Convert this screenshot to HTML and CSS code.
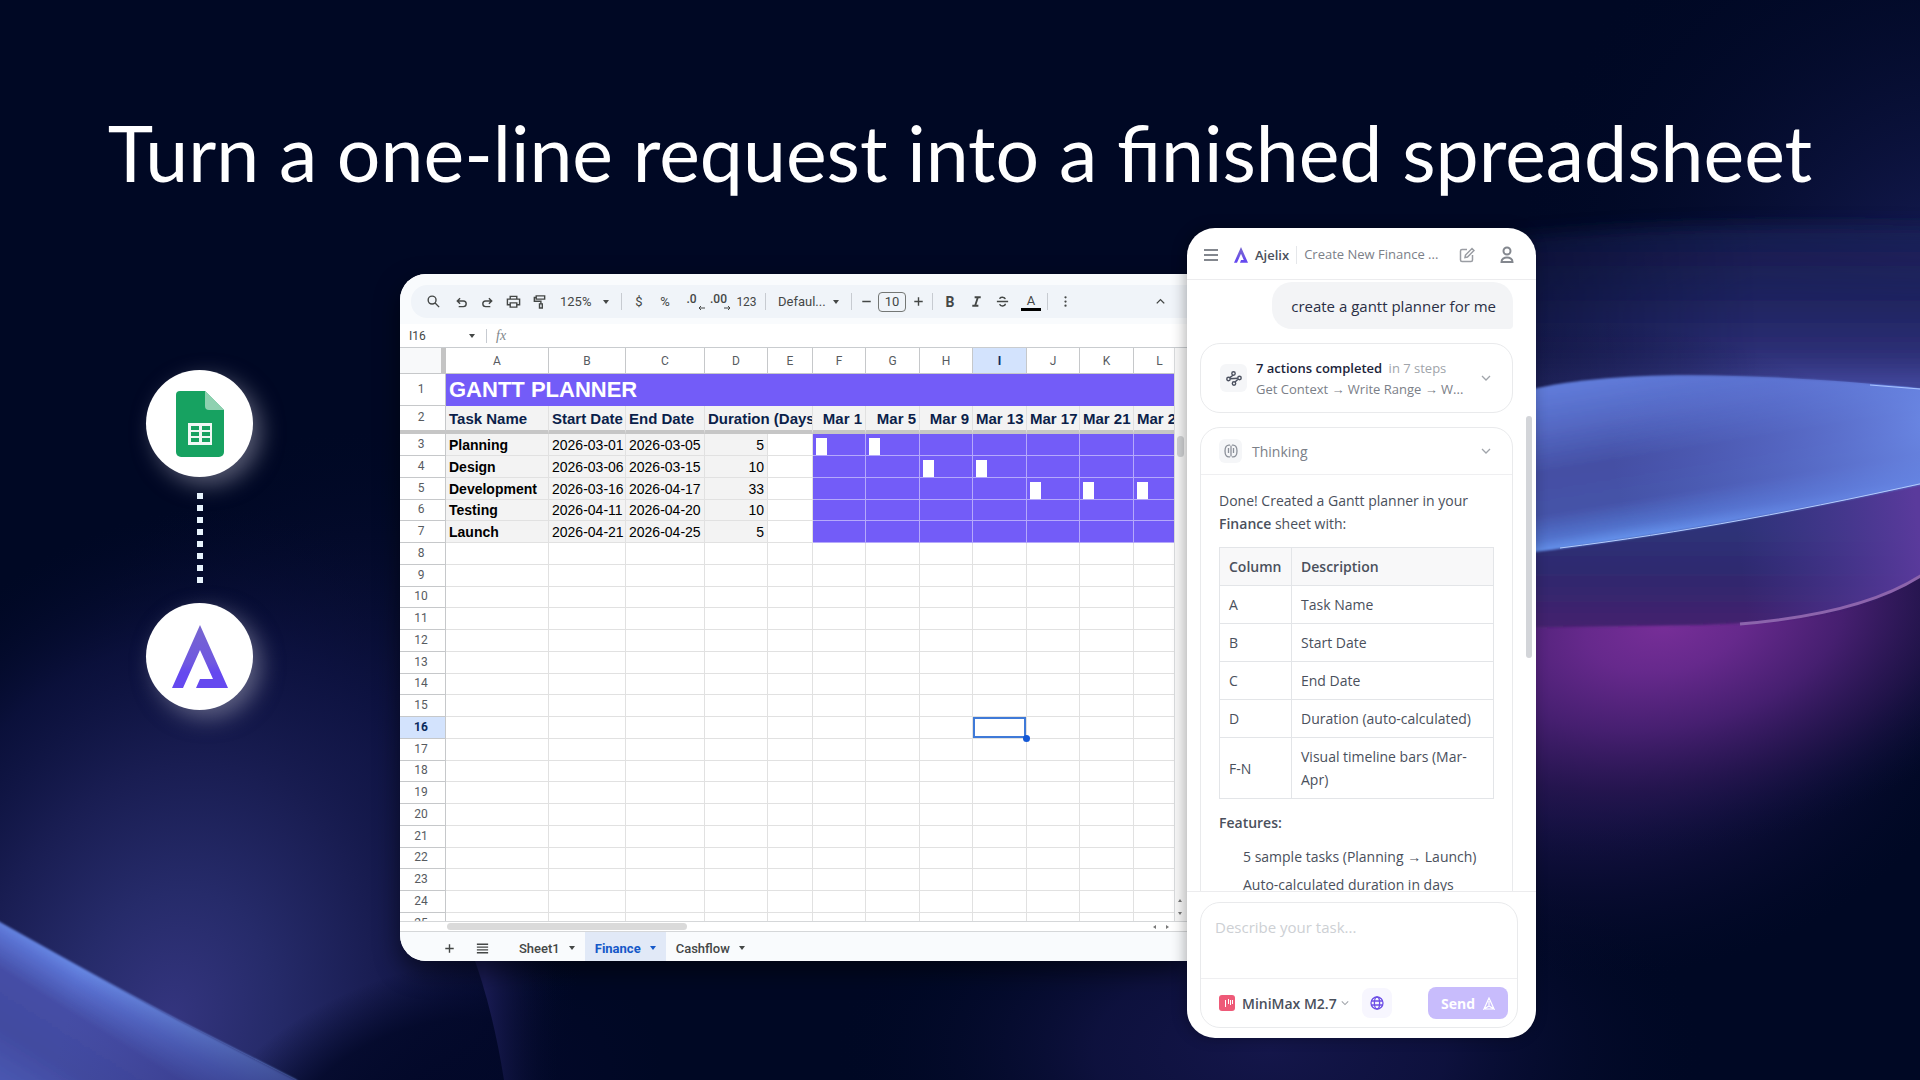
FILE: index.html
```html
<!DOCTYPE html>
<html lang="en">
<head>
    <meta charset="utf-8">
    <title>Turn a one-line request into a finished spreadsheet</title>
    <link rel="stylesheet" href="styles.css">
</head>
<body>
    <!-- Background waves -->
    <svg class="backdrop" viewBox="0 0 1920 1080" preserveAspectRatio="none" aria-hidden="true">
        <defs>
            <radialGradient id="topRight" cx="1960" cy="300" r="460" gradientUnits="userSpaceOnUse">
                <stop offset="0" stop-color="#1a1f5c"/>
                <stop offset="1" stop-color="#000824" stop-opacity="0"/>
            </radialGradient>
            <linearGradient id="haze" x1="0" y1="215" x2="0" y2="390" gradientUnits="userSpaceOnUse">
                <stop offset="0" stop-color="#1c2058" stop-opacity=".6"/>
                <stop offset=".5" stop-color="#1f2460"/>
                <stop offset=".8" stop-color="#2d2f76"/>
                <stop offset="1" stop-color="#444aa0"/>
            </linearGradient>
            <linearGradient id="fadeX" x1="1420" x2="1760" y1="0" y2="0" gradientUnits="userSpaceOnUse">
                <stop offset="0" stop-color="#444"/>
                <stop offset="1" stop-color="#fff"/>
            </linearGradient>
            <mask id="fadeMask" maskUnits="userSpaceOnUse" x="0" y="0" width="1920" height="1080"><rect width="1920" height="1080" fill="url(#fadeX)"/></mask>
            <linearGradient id="wave" x1="1650" y1="374" x2="1676" y2="534" gradientUnits="userSpaceOnUse">
                <stop offset="0" stop-color="#5f7ad8"/>
                <stop offset=".2" stop-color="#566bc6"/>
                <stop offset=".5" stop-color="#444fa4"/>
                <stop offset=".75" stop-color="#4553a8"/>
                <stop offset=".9" stop-color="#5272cc"/>
                <stop offset="1" stop-color="#6b9cf6"/>
            </linearGradient>
            <radialGradient id="waveGlow" cx="1940" cy="420" r="330" gradientUnits="userSpaceOnUse">
                <stop offset="0" stop-color="#7090ee" stop-opacity=".9"/>
                <stop offset=".5" stop-color="#6279da" stop-opacity=".5"/>
                <stop offset="1" stop-color="#5a6fd0" stop-opacity="0"/>
            </radialGradient>
            <linearGradient id="under" x1="0" y1="530" x2="0" y2="628" gradientUnits="userSpaceOnUse">
                <stop offset="0" stop-color="#2e3278"/>
                <stop offset=".5" stop-color="#30286e"/>
                <stop offset="1" stop-color="#45216e"/>
            </linearGradient>
            <linearGradient id="underRight" x1="1740" y1="560" x2="1920" y2="540" gradientUnits="userSpaceOnUse">
                <stop offset="0" stop-color="#4a3a98" stop-opacity="0"/>
                <stop offset="1" stop-color="#5a3a9c"/>
            </linearGradient>
            <radialGradient id="violet" cx="0" cy="0" r="1" gradientUnits="userSpaceOnUse" gradientTransform="translate(1665 625) rotate(-10) scale(400 230)">
                <stop offset="0" stop-color="#772e98"/>
                <stop offset=".2" stop-color="#66298c"/>
                <stop offset=".45" stop-color="#461f70"/>
                <stop offset=".7" stop-color="#26154f" stop-opacity=".8"/>
                <stop offset="1" stop-color="#0a0f38" stop-opacity="0"/>
            </radialGradient>
            <radialGradient id="violetBase" cx="0" cy="0" r="1" gradientUnits="userSpaceOnUse" gradientTransform="translate(1580 650) scale(420 330)">
                <stop offset="0" stop-color="#401c6c"/>
                <stop offset=".5" stop-color="#1f1550" stop-opacity=".8"/>
                <stop offset="1" stop-color="#050a2c" stop-opacity="0"/>
            </radialGradient>
            <linearGradient id="corner" x1="130" y1="985" x2="40" y2="1130" gradientUnits="userSpaceOnUse">
                <stop offset="0" stop-color="#739cf4"/>
                <stop offset=".14" stop-color="#5a72d2"/>
                <stop offset=".32" stop-color="#454ea6"/>
                <stop offset=".6" stop-color="#424ba0"/>
                <stop offset="1" stop-color="#4c5cb8"/>
            </linearGradient>
            <linearGradient id="cornerFade" x1="60" x2="300" y1="1040" y2="1100" gradientUnits="userSpaceOnUse">
                <stop offset="0" stop-color="#3a3a8c" stop-opacity="0"/>
                <stop offset="1" stop-color="#1e1f5c" stop-opacity=".7"/>
            </linearGradient>
            <radialGradient id="leftGlow" cx="0" cy="0" r="1" gradientUnits="userSpaceOnUse" gradientTransform="translate(170 1020) rotate(15) scale(400 520)">
                <stop offset="0" stop-color="#34357f"/>
                <stop offset=".25" stop-color="#262b6a"/>
                <stop offset=".5" stop-color="#191d52"/>
                <stop offset=".75" stop-color="#0d1240" stop-opacity=".8"/>
                <stop offset="1" stop-color="#040a2c" stop-opacity="0"/>
            </radialGradient>
            <radialGradient id="midGlow" cx="0" cy="0" r="1" gradientUnits="userSpaceOnUse" gradientTransform="translate(360 760) scale(300 330)">
                <stop offset="0" stop-color="#171a54" stop-opacity=".9"/>
                <stop offset="1" stop-color="#050a2c" stop-opacity="0"/>
            </radialGradient>
            <radialGradient id="footGlow" cx="0" cy="0" r="1" gradientUnits="userSpaceOnUse" gradientTransform="translate(1270 1050) scale(440 230)">
                <stop offset="0" stop-color="#14164a"/>
                <stop offset=".4" stop-color="#0f1240" stop-opacity=".9"/>
                <stop offset="1" stop-color="#000824" stop-opacity="0"/>
            </radialGradient>
            <radialGradient id="footShade" cx="0" cy="0" r="1" gradientUnits="userSpaceOnUse" gradientTransform="translate(430 1110) rotate(-18) scale(240 140)">
                <stop offset="0" stop-color="#020828"/>
                <stop offset=".6" stop-color="#020828" stop-opacity=".85"/>
                <stop offset="1" stop-color="#020828" stop-opacity="0"/>
            </radialGradient>
            <linearGradient id="fin" x1="485" x2="565" y1="0" y2="0" gradientUnits="userSpaceOnUse">
                <stop offset="0" stop-color="#191b52"/>
                <stop offset="1" stop-color="#000824" stop-opacity="0"/>
            </linearGradient>
            <filter id="soft" filterUnits="userSpaceOnUse" x="0" y="0" width="1980" height="1140"><feGaussianBlur stdDeviation="8"/></filter>
            <filter id="edge" filterUnits="userSpaceOnUse" x="-40" y="0" width="2000" height="1180"><feGaussianBlur stdDeviation="1"/></filter>
        </defs>
        <rect width="1920" height="1080" fill="#000824"/>
        <!-- left side -->
        <rect width="800" height="1080" fill="url(#midGlow)"/>
        <rect width="800" height="1080" fill="url(#leftGlow)"/>
        <rect y="800" width="800" height="280" fill="url(#footShade)"/>
        <path d="M471 950 Q492 1005 504 1080 L580 1080 L580 950Z" fill="url(#fin)"/>
        <path d="M-40 897 L0 922 Q112 985 178 1020 L296 1080 L340 1120 L-40 1120Z" fill="url(#corner)" filter="url(#edge)"/>
        <path d="M0 922 Q112 985 178 1020 L296 1080 L0 1080Z" fill="url(#cornerFade)"/>
        <!-- bottom middle -->
        <rect x="800" y="800" width="1000" height="280" fill="url(#footGlow)"/>
        <!-- right side -->
        <rect x="1400" width="520" height="800" fill="url(#topRight)"/>
        <g mask="url(#fadeMask)">
            <path d="M1400 250 C1600 222 1760 222 1960 226 L1960 400 L1400 400Z" fill="url(#haze)" filter="url(#soft)"/>
        </g>
        <rect x="1160" y="300" width="760" height="780" fill="url(#violetBase)"/>
        <rect x="1200" y="380" width="720" height="560" fill="url(#violet)"/>
        <path d="M1480 555 L1960 470 L1960 540 C1900 600 1850 620 1700 625 L1480 628Z" fill="url(#under)" filter="url(#edge)"/>
        <path d="M1700 525 L1920 483 L1920 575 Q1862 614 1740 624Z" fill="url(#underRight)"/>
        <path d="M1740 624 Q1862 614 1922 575" fill="none" stroke="#8c64ac" stroke-width="3"/>
        <path d="M1470 410 C1560 366 1720 368 1960 392 L1960 476 C1780 515 1640 540 1470 560Z" fill="url(#wave)" filter="url(#edge)"/>
        <path d="M1470 410 C1560 366 1720 368 1960 392 L1960 476 C1780 515 1640 540 1470 560Z" fill="url(#waveGlow)"/>
        <path d="M1560 548 C1680 533 1800 511 1960 475" fill="none" stroke="#b4ccfd" stroke-width="1"/>
        <path d="M1870 385 L1920 389" stroke="#a9c4ff" stroke-width="1"/>
    </svg>

    <h1 class="headline">Turn a one-line request into a finished spreadsheet</h1>

    <main class="stage">
        <div class="connector">
            <div class="badge">
                <svg width="50" height="68" viewBox="0 0 50 68">
                    <path d="M5 1h25l19 19v42a5 5 0 0 1-5 5H6a5 5 0 0 1-5-5V5a4 4 0 0 1 4-4z" fill="#17a261"/>
                    <path d="M30 1l19 19H34a4 4 0 0 1-4-4z" fill="#8ed1b0"/>
                    <path d="M13 33h24v22H13z" fill="#f1f8f4"/>
                    <path d="M16 36h8v4h-8zM27 36h8v4h-8zM16 42h8v4h-8zM27 42h8v4h-8zM16 48h8v4h-8zM27 48h8v4h-8z" fill="#17a261"/>
                </svg>
            </div>
            <div class="dots">
                <i></i><i></i><i></i><i></i><i></i><i></i><i></i><i></i>
            </div>
            <div class="badge">
                <svg width="56" height="64" viewBox="0 0 56 64">
                    <defs>
                        <linearGradient id="brand" x1="0" y1="0" x2="0" y2="1">
                            <stop offset="0" stop-color="#7866cf"/>
                            <stop offset=".6" stop-color="#6f58e0"/>
                            <stop offset=".75" stop-color="#6549ef"/>
                        </linearGradient>
                    </defs>
                    <path d="M28 0L56 63H24l4-9h13L28 25 11 63H0z" fill="url(#brand)"/>
                </svg>
            </div>
        </div>

        <section class="sheet">
            <div class="toolbar-wrap">
                <div class="toolbar">
                    <button class="tool search" aria-label="Search the menus"><svg class="ico" viewBox="0 0 16 16"><circle cx="6.500" cy="6.500" r="4.200"/><path d="M9.700 9.700L14 14"/></svg></button>
                    <button class="tool" aria-label="Undo"><svg class="ico" viewBox="0 0 16 16"><path d="M6.500 4.500L3.500 7.500l3 3M3.500 7.500h6.500a3 3 0 0 1 0 6H5"/></svg></button>
                    <button class="tool" aria-label="Redo"><svg class="ico" viewBox="0 0 16 16"><path d="M9.500 4.500l3 3-3 3M12.500 7.500H6a3 3 0 0 0 0 6h5"/></svg></button>
                    <button class="tool" aria-label="Print"><svg class="ico" viewBox="0 0 16 16"><path d="M4.500 5.500V2.500h7v3M4.500 11.500h-3v-6h13v6h-3M4.500 9.500h7v4.500h-7z"/></svg></button>
                    <button class="tool" aria-label="Paint format"><svg class="ico" viewBox="0 0 16 16"><path d="M4.500 2h9v3.500h-9zM4.500 3.700H2.500v4h7v2.500M8 10.500h3v4.500H8z"/></svg></button>
                    <span class="pick zoom"><select aria-label="Zoom"><option>125%</option></select></span>
                    <span class="sep"></span>
                    <button class="tool">$</button>
                    <button class="tool">%</button>
                    <button class="tool decimal" aria-label="Decrease decimal places">.0<svg width="8" height="6" viewBox="0 0 8 6"><path d="M8 3H2M4 1L2 3l2 2"/></svg></button>
                    <button class="tool decimal" aria-label="Increase decimal places">.00<svg width="8" height="6" viewBox="0 0 8 6"><path d="M0 3h6M4 1l2 2-2 2"/></svg></button>
                    <button class="tool number">123</button>
                    <span class="sep"></span>
                    <span class="pick font"><select aria-label="Font"><option>Defaul...</option></select></span>
                    <span class="sep"></span>
                    <button class="tool step" aria-label="Decrease font size"><svg class="ico" viewBox="0 0 16 16"><path d="M3.500 8h9"/></svg></button>
                    <input class="size" type="text" value="10" aria-label="Font size">
                    <button class="tool step" aria-label="Increase font size"><svg class="ico" viewBox="0 0 16 16"><path d="M3.500 8h9M8 3.500v9"/></svg></button>
                    <span class="sep"></span>
                    <button class="tool bold">B</button>
                    <button class="tool" aria-label="Italic"><svg class="ico heavy" viewBox="0 0 16 16"><path d="M6 3.500h6.500M3.500 12.500H10M9.500 3.500l-3 9"/></svg></button>
                    <button class="tool" aria-label="Strikethrough"><svg class="ico" viewBox="0 0 16 16"><path d="M2 8h12M11 5.500C10.500 3 5.500 2.500 5 5.200M5 10.800c.5 2.800 6 2.600 6-.3"/></svg></button>
                    <button class="tool ink">A</button>
                    <span class="sep"></span>
                    <button class="tool" aria-label="More"><svg class="ico solid" viewBox="0 0 16 16"><circle cx="8" cy="3.500" r="1.200"/><circle cx="8" cy="8" r="1.200"/><circle cx="8" cy="12.500" r="1.200"/></svg></button>
                    <button class="tool last" aria-label="Hide the menus"><svg class="ico" viewBox="0 0 16 16"><path d="M4 10l4-4 4 4"/></svg></button>
                </div>
            </div>

            <div class="formula">
                <input class="name-box" type="text" value="I16" aria-label="Name box">
                <span class="caret"></span>
                <span class="fx">fx</span>
            </div>

            <div class="grid-area">
                <div class="grid-view">
                    <table class="grid">
                        <colgroup>
                            <col class="c-num"><col class="c-a"><col class="c-b"><col class="c-c"><col class="c-d"><col class="c-e">
                            <col class="c-odd"><col class="c-even"><col class="c-odd"><col class="c-even"><col class="c-odd"><col class="c-even"><col>
                        </colgroup>
                        <thead>
                            <tr class="letters"><th class="all"></th><th>A</th><th>B</th><th>C</th><th>D</th><th>E</th><th>F</th><th>G</th><th>H</th><th class="on">I</th><th>J</th><th>K</th><th>L</th></tr>
                            <tr class="title"><th>1</th><td colspan="12">GANTT PLANNER</td></tr>
                            <tr class="heads"><th>2</th><td>Task Name</td><td>Start Date</td><td>End Date</td><td colspan="2">Duration (Days)</td><td class="r">Mar 1</td><td class="r">Mar 5</td><td class="r">Mar 9</td><td class="r">Mar 13</td><td class="r">Mar 17</td><td class="r">Mar 21</td><td class="r">Mar 25</td></tr>
                        </thead>
                        <tbody id="rows">
                            <tr class="task"><th>3</th><td>Planning</td><td>2026-03-01</td><td>2026-03-05</td><td>5</td><td></td><td><b></b></td><td><b></b></td><td></td><td></td><td></td><td></td><td></td></tr>
                            <tr class="task"><th>4</th><td>Design</td><td>2026-03-06</td><td>2026-03-15</td><td>10</td><td></td><td></td><td></td><td><b></b></td><td><b></b></td><td></td><td></td><td></td></tr>
                            <tr class="task"><th>5</th><td>Development</td><td>2026-03-16</td><td>2026-04-17</td><td>33</td><td></td><td></td><td></td><td></td><td></td><td><b></b></td><td><b></b></td><td><b></b></td></tr>
                            <tr class="task"><th>6</th><td>Testing</td><td>2026-04-11</td><td>2026-04-20</td><td>10</td><td></td><td></td><td></td><td></td><td></td><td></td><td></td><td></td></tr>
                            <tr class="task"><th>7</th><td>Launch</td><td>2026-04-21</td><td>2026-04-25</td><td>5</td><td></td><td></td><td></td><td></td><td></td><td></td><td></td><td></td></tr>
                        </tbody>
                    </table>
                </div>
                <div class="vscroll">
                    <span class="vthumb"></span>
                    <span class="arrow up"></span>
                    <span class="arrow down"></span>
                </div>
            </div>
            <div class="hscroll">
                <span class="hthumb"></span>
                <span class="arrow left"></span>
                <span class="arrow right"></span>
            </div>

            <nav class="tabs">
                <button class="tab-tool" aria-label="Add sheet"><svg class="ico" viewBox="0 0 16 16"><path d="M3.500 8h9M8 3.500v9"/></svg></button>
                <button class="tab-tool" aria-label="All sheets"><svg class="ico" viewBox="0 0 16 16"><path d="M2 3.500h12M2 6.500h12M2 9.500h12M2 12.500h12"/></svg></button>
                <button class="tab">Sheet1<span class="caret"></span></button>
                <button class="tab active">Finance<span class="caret"></span></button>
                <button class="tab">Cashflow<span class="caret"></span></button>
            </nav>
        </section>

        <aside class="chat">
            <header class="chat-head">
                <button class="plain" aria-label="Menu"><svg width="14" height="14" viewBox="0 0 14 14"><path d="M0 2h14M0 7h14M0 12h14" stroke="#83878e" stroke-width="2"/></svg></button>
                <svg class="mark" width="14" height="16" viewBox="0 0 56 64"><path d="M28 0L56 63H24l4-11h11L28 27 12 63H0z" fill="url(#brand)"/></svg>
                <strong>Ajelix</strong>
                <span class="chat-title">Create New Finance ...</span>
                <button class="plain edit" aria-label="New chat"><svg width="16" height="16" viewBox="0 0 16 16" fill="none" stroke="#9a9da3" stroke-width="1.500"><path d="M8 2.500H3A1.500 1.500 0 0 0 1.500 4v9A1.500 1.500 0 0 0 3 14.500h9a1.500 1.500 0 0 0 1.500-1.500V8"/><path d="M6 10.500l.5-2.500 6.500-6.500 2 2L8.500 10z"/></svg></button>
                <button class="plain" aria-label="Account"><svg width="14" height="18" viewBox="0 0 14 18" fill="none" stroke="#83878e" stroke-width="2"><circle cx="7" cy="5" r="3.500"/><path d="M1.500 16c0-6 11-6 11 0z"/></svg></button>
            </header>

            <div class="log">
                <div class="bubble">create a gantt planner for me</div>
                <div class="card actions">
                    <span class="chip big"><svg width="16" height="16" viewBox="0 0 16 16" fill="none" stroke="#4c5160" stroke-width="1.400"><circle cx="2.500" cy="9" r="1.700"/><circle cx="7.500" cy="3.500" r="1.700"/><circle cx="13.500" cy="8" r="1.700"/><circle cx="8" cy="13.500" r="1.700"/><path d="M4.200 8.800l7.600-.6M7 5.200L3.800 7.600M9 12l3-2.800"/></svg></span>
                    <div class="steps">
                        <p><strong>7 actions completed</strong> <span>in 7 steps</span></p>
                        <p>Get Context → Write Range → W...</p>
                    </div>
                    <svg class="chev" viewBox="0 0 10 6"><path d="M1 1l4 4 4-4"/></svg>
                </div>
                <div class="card answer">
                    <div class="think">
                        <span class="chip"><svg width="14" height="14" viewBox="0 0 14 14" fill="none" stroke="#8b9099" stroke-width="1.300"><path d="M7 1.500v11M6 1.200C2.500.5 1 3 1 7s1.500 6.500 5 5.800M8 1.200C11.500.5 13 3 13 7s-1.500 6.500-5 5.800M4.500 4v5M9.500 4v5"/></svg></span>
                        <span class="label">Thinking</span>
                        <svg class="chev" viewBox="0 0 10 6"><path d="M1 1l4 4 4-4"/></svg>
                    </div>
                    <div class="reply">
                        <p>Done! Created a Gantt planner in your <strong>Finance</strong> sheet with:</p>
                        <table class="desc">
                            <thead><tr><th>Column</th><th>Description</th></tr></thead>
                            <tbody>
                                <tr><td>A</td><td>Task Name</td></tr>
                                <tr><td>B</td><td>Start Date</td></tr>
                                <tr><td>C</td><td>End Date</td></tr>
                                <tr><td>D</td><td>Duration (auto-calculated)</td></tr>
                                <tr><td>F-N</td><td>Visual timeline bars (Mar-Apr)</td></tr>
                            </tbody>
                        </table>
                        <p><strong>Features:</strong></p>
                        <ul>
                            <li>5 sample tasks (Planning → Launch)</li>
                            <li>Auto-calculated duration in days</li>
                        </ul>
                    </div>
                </div>
                <span class="log-thumb"></span>
            </div>

            <form class="composer">
                <div class="box">
                    <textarea placeholder="Describe your task..." aria-label="Describe your task"></textarea>
                    <div class="bar">
                        <svg class="model-logo" width="16" height="16" viewBox="0 0 16 16"><rect width="16" height="16" rx="3" fill="#ee5a78"/><path d="M6.500 5v7M9.500 4v5M11.500 5v5M13.500 5v4" stroke="#fff" stroke-width="1"/></svg>
                        <select class="model" aria-label="Model"><option>MiniMax M2.7</option></select>
                        <svg class="chev small" viewBox="0 0 10 6"><path d="M1 1l4 4 4-4"/></svg>
                        <button type="button" class="globe" aria-label="Web search"><svg width="14" height="14" viewBox="0 0 14 14" fill="none" stroke="#6d4fe6" stroke-width="1.300"><circle cx="7" cy="7" r="6"/><ellipse cx="7" cy="7" rx="2.600" ry="6"/><path d="M1.500 5h11M1.500 9h11"/></svg></button>
                        <button type="button" class="send">Send <svg width="12" height="13" viewBox="0 0 12 13" fill="none" stroke="#fff" stroke-width="1.200"><path d="M6 1l5 11-5-3-5 3zM6 4v5M1 12h10"/></svg></button>
                    </div>
                </div>
            </form>
        </aside>
    </main>

    <script src="script.js"></script>
</body>
</html>
```
FILE: styles.css
```css
* {
    box-sizing: border-box;
}
body {
    margin: 0;
    min-height: 100vh;
    position: relative;
    overflow: hidden;
    background-color: #000824;
    font-family: "Liberation Sans", Arial, sans-serif;
}
p, h1, ul {
    margin: 0;
}
button, input, select, textarea {
    font: inherit;
    color: inherit;
    border: none;
    background: none;
    padding: 0;
    margin: 0;
}
select {
    appearance: none;
}
/* fills the page behind everything */
.backdrop {
    position: absolute;
    top: 0;
    left: 0;
    width: 100%;
    height: 100%;
    z-index: -1;
}
.headline {
    padding-top: 104px;
    height: 228px;
    text-align: center;
    color: #fff;
    font-family: "Futura PT", Futura, Lato, sans-serif;
    font-weight: 400;
    font-size: 77px;
    line-height: 96px;
    white-space: nowrap;
}
.stage {
    display: flex;
    align-items: flex-start;
    padding: 0 20% 40px 146px;
}

/* Logos on the left */
.connector {
    width: 107px;
    margin: 142px 147px 0 0;
    display: flex;
    flex-direction: column;
    align-items: center;
}
.badge {
    width: 107px;
    height: 107px;
    border-radius: 50%;
    background-color: #fff;
    display: flex;
    align-items: center;
    justify-content: center;
    box-shadow: 8px 8px 22px rgba(170, 170, 190, 0.5);
}
.dots {
    display: flex;
    flex-direction: column;
    gap: 6px;
    padding: 16px 0 20px;
}
.dots i {
    width: 6px;
    height: 6px;
    background-color: #e8f4fd;
}

/* Spreadsheet */
.sheet {
    flex: 1;
    min-width: 0;
    margin-top: 46px;
    border-radius: 26px 0 0 26px;
    overflow: hidden;
    background-color: #fff;
    box-shadow: 0 10px 24px rgba(0, 0, 0, 0.5);
}
.toolbar-wrap {
    background-color: #f9fbfd;
    padding: 11px 0 6px 11px;
}
.toolbar {
    height: 33px;
    display: flex;
    align-items: center;
    padding: 0 14px 0 7px;
    border-radius: 16px 0 0 16px;
    background-color: #f0f4f9;
    font-family: Roboto, sans-serif;
    font-size: 13px;
    color: #444746;
}
.tool {
    width: 26px;
    flex: none;
    display: flex;
    align-items: center;
    justify-content: center;
}
.tool.search {
    width: 30px;
}
.tool.number {
    width: 29px;
    font-size: 12px;
}
.tool.step {
    width: 20px;
}
.tool.bold {
    font-weight: 700;
    font-size: 14px;
}
.tool.last {
    margin-left: auto;
}
.tool.decimal {
    width: 27px;
    font-size: 12px;
    font-weight: 500;
    line-height: 12px;
    flex-direction: column;
}
.decimal svg {
    align-self: flex-end;
    fill: none;
    stroke: #444746;
}
.tool.ink {
    margin: 0 2px 0 6px;
    width: 20px;
    border-bottom: 3px solid #000;
    line-height: 15px;
}
.ico {
    width: 15px;
    height: 15px;
    fill: none;
    stroke: #444746;
    stroke-width: 1.5;
}
.ico.heavy {
    stroke-width: 2;
}
.ico.solid {
    fill: #444746;
    stroke: none;
}
.sep {
    width: 1px;
    height: 17px;
    margin: 0 4px;
    background-color: #c7cbd1;
}
.pick {
    position: relative;
    display: flex;
    align-items: center;
}
.pick select {
    width: 100%;
    padding-left: 8px;
}
.pick::after, .caret {
    content: "";
    border: 3px solid transparent;
    border-top: 4px solid #444746;
    border-bottom: 0;
    flex: none;
}
.pick::after {
    position: absolute;
    right: 8px;
}
.pick.zoom {
    width: 65px;
}
.pick.font {
    width: 77px;
}
.size {
    width: 28px;
    height: 20px;
    margin: 0 2px;
    border: 1px solid #747775;
    border-radius: 4px;
    text-align: center;
}
.formula {
    height: 23px;
    display: flex;
    align-items: center;
    padding: 0 0 0 9px;
    font-family: Roboto, sans-serif;
    font-size: 12px;
    color: #444746;
}
.name-box {
    width: 60px;
}
.fx {
    margin-left: 11px;
    padding-left: 9px;
    border-left: 1px solid #c7cbd1;
    font-family: "Liberation Serif", serif;
    font-style: italic;
    font-size: 14px;
    line-height: 14px;
    color: #80868b;
}
.grid-area {
    display: flex;
    height: 575px;
    border-top: 1px solid #c9cccf;
    border-bottom: 1px solid #d5d7d9;
}
.grid-view {
    flex: 1;
    min-width: 0;
    overflow: hidden;
    border-right: 1px solid #d9dbdd;
}
/* last column runs on under the scrollbar */
.grid {
    width: calc(100% + 12px);
    table-layout: fixed;
    border-collapse: separate;
    border-spacing: 0;
    font-size: 14px;
    line-height: 16px;
    color: #000;
}
.c-num { width: 46px; }
.c-a { width: 103px; }
.c-b { width: 77px; }
.c-c { width: 79px; }
.c-d { width: 63px; }
.c-e { width: 45px; }
.c-odd { width: 53px; }
.c-even { width: 54px; }
.grid th, .grid td {
    padding: 0 3px;
    height: 22px;
    border-right: 1px solid #e1e1e1;
    border-bottom: 1px solid #e1e1e1;
    overflow: hidden;
    white-space: nowrap;
    text-align: left;
}
.grid th {
    text-align: center;
    font-family: Roboto, sans-serif;
    font-size: 12px;
    font-weight: 400;
    color: #575b5f;
    border-color: #c6c8ca;
    padding: 0 3px 2px 0;
}
.grid tbody tr:nth-child(4n) > * {
    height: 21px;
}
.grid .letters th {
    height: 26px;
    padding: 0;
}
.grid .letters .all {
    background-color: #f8f9fa;
    border-right: 5px solid #c4c4c4;
}
.grid th.on {
    background-color: #d3e3fd;
    color: #0b2a5c;
    font-weight: 700;
}
.grid .title > * {
    height: 32px;
}
.grid .title td {
    background-color: #735cf8;
    border-color: #735cf8;
    color: #fff;
    font-size: 22px;
    line-height: 24px;
    font-weight: 700;
}
.grid .heads > * {
    height: 28px;
    border-bottom: 4px solid #c6c6c6;
}
.grid .heads td {
    background-color: #f3f3f3;
    color: #0b1f4a;
    font-size: 15px;
    font-weight: 700;
    padding-top: 2px;
}
.grid .heads .r {
    text-align: right;
}
.task td:nth-child(-n+5) {
    background-color: #f3f3f3;
}
.task td:nth-child(2) {
    font-weight: 700;
}
.task td:nth-child(5) {
    text-align: right;
}
.grid .task td:nth-child(n+7) {
    background-color: #735cf8;
    border-color: #b5a9fb;
    vertical-align: bottom;
}
.task b {
    display: block;
    width: 11px;
    height: 17px;
    background-color: #fff;
}
.grid td.selected {
    position: relative;
    overflow: visible;
    box-shadow: inset 0 0 0 2px #3f7ad8;
}
.selected::after {
    content: "";
    position: absolute;
    right: -4px;
    bottom: -4px;
    width: 7px;
    height: 7px;
    border-radius: 50%;
    background-color: #1559d6;
}
.vscroll {
    width: 12px;
    display: flex;
    flex-direction: column;
    align-items: center;
    gap: 10px;
    padding: 88px 2px 4px 0;
    background-color: #f8f8f8;
}
.vthumb {
    width: 7px;
    height: 21px;
    border-radius: 4px;
    background-color: #d0d2d4;
    margin-bottom: auto;
}
.arrow {
    border: 2px solid transparent;
}
.arrow.up { border-bottom: 3px solid #777; }
.arrow.down { border-top: 3px solid #777; }
.arrow.left { border-right: 3px solid #777; }
.arrow.right { border-left: 3px solid #777; }
.hscroll {
    height: 10px;
    display: flex;
    align-items: center;
    gap: 10px;
    padding: 0 16px 0 47px;
    border-bottom: 1px solid #d5d7d9;
}
.hthumb {
    width: 240px;
    height: 7px;
    border-radius: 4px;
    background-color: #dadada;
    margin-right: auto;
}
.tabs {
    height: 29px;
    display: flex;
    align-items: stretch;
    padding-left: 36px;
    background-color: #f9fbfd;
    font-family: Roboto, sans-serif;
    font-size: 13px;
    font-weight: 500;
    color: #444746;
}
.tab-tool {
    width: 26px;
    margin-right: 7px;
    padding-top: 3px;
    display: flex;
    align-items: center;
    justify-content: center;
}
.tab {
    display: flex;
    align-items: center;
    gap: 9px;
    padding: 3px 10px 0;
}
.tab-tool + .tab {
    margin-left: 7px;
}
.tab.active {
    background-color: #e1e9f7;
    color: #1558c8;
    font-weight: 700;
}
.tab.active .caret {
    border-top-color: #1558c8;
}

/* Chat panel */
.chat {
    width: 349px;
    flex: none;
    position: relative;
    border-radius: 28px;
    overflow: hidden;
    background-color: #fff;
    box-shadow: -2px 0 14px rgba(0, 0, 0, 0.3);
    font-family: "Open Sans", "Noto Sans", sans-serif;
    font-size: 14px;
    line-height: 23px;
    color: #4a505c;
}
.chat strong {
    font-weight: 600;
}
.chat-head {
    height: 52px;
    display: flex;
    align-items: center;
    padding: 2px 22px 0 17px;
    border-bottom: 1px solid #ececee;
    font-size: 13px;
    color: #7b8088;
}
.chat-head strong {
    color: #4a505c;
    padding-right: 7px;
    border-right: 1px solid #e5e7ea;
    line-height: 18px;
}
.plain {
    display: flex;
}
.mark {
    margin: 0 7px 0 16px;
}
.chat-title {
    padding-left: 7px;
}
.edit {
    margin: 0 25px 0 auto;
}
.log {
    position: relative;
    height: 611px;
    overflow: hidden;
    display: flex;
    flex-direction: column;
    padding: 2px 23px 0 13px;
}
.bubble {
    align-self: flex-end;
    padding: 13px 17px 11px 19px;
    border-radius: 20px 20px 4px 20px;
    background-color: #f3f4f6;
    color: #2a2f45;
    font-size: 15px;
}
.card {
    border: 1px solid #e9eaec;
    border-radius: 20px;
    margin-top: 14px;
}
.actions {
    height: 70px;
    flex: none;
    display: flex;
    align-items: center;
    padding: 0 21px 0 19px;
    font-size: 13px;
    line-height: 21px;
    color: #7b8088;
}
.actions strong {
    color: #20243a;
}
.actions span {
    color: #a0a4aa;
    margin-left: 3px;
}
.actions .chip {
    margin-left: 0;
}
.steps {
    flex: 1;
    padding: 2px 0 0 9px;
    white-space: nowrap;
}
.chip {
    width: 23px;
    height: 24px;
    border-radius: 6px;
    background-color: #f5f6f8;
    display: flex;
    align-items: center;
    justify-content: center;
}
.chip.big {
    width: 27px;
    height: 28px;
}
.chev {
    width: 10px;
    height: 6px;
    fill: none;
    stroke: #a0a4aa;
    stroke-width: 1.3;
}
.answer {
    border-radius: 20px 20px 0 0;
    flex: none;
}
.think {
    height: 47px;
    display: flex;
    align-items: center;
    padding: 0 21px 0 18px;
    border-bottom: 1px solid #efeff1;
    color: #7b8088;
}
.think .label {
    flex: 1;
    padding-left: 10px;
}
.reply {
    padding: 14px 18px 0;
}
.desc {
    width: 100%;
    margin: 12px 0;
    border-collapse: collapse;
}
.desc th, .desc td {
    padding: 7px 9px;
    border: 1px solid #e3e5e8;
    text-align: left;
    font-weight: 400;
}
.desc th {
    background-color: #f8f8f9;
    font-weight: 600;
}
.desc th:first-child {
    width: 72px;
}
.reply ul {
    list-style: none;
    padding: 11px 0 0 24px;
    white-space: nowrap;
}
.reply li {
    margin-bottom: 5px;
}
.log-thumb {
    position: absolute;
    right: 4px;
    top: 136px;
    width: 6px;
    height: 242px;
    border-radius: 3px;
    background-color: #d3d5d9;
}
.composer {
    border-top: 1px solid #ececee;
    padding: 10px 18px 10px 13px;
}
.box {
    border: 1px solid #e9eaec;
    border-radius: 20px;
}
.box textarea {
    display: block;
    width: 100%;
    height: 76px;
    padding: 13px 14px;
    resize: none;
    font-size: 15px;
    border-bottom: 1px solid #efeff1;
}
.box textarea::placeholder {
    color: #cdd0d4;
}
.bar {
    height: 48px;
    display: flex;
    align-items: center;
    padding: 0 9px 0 18px;
}
.model {
    margin: 0 4px 0 7px;
    font-weight: 600;
}
.chev.small {
    width: 8px;
}
.globe {
    width: 30px;
    height: 30px;
    margin-left: 13px;
    border-radius: 8px;
    background-color: #f7f6fe;
    display: flex;
    align-items: center;
    justify-content: center;
}
.send {
    width: 80px;
    height: 32px;
    margin-left: auto;
    border-radius: 8px;
    background-color: #c8bcfc;
    color: #fff;
    font-weight: 700;
    display: flex;
    align-items: center;
    justify-content: center;
    gap: 8px;
}
```
FILE: script.js
```js
// blank rows below the plan
var rows = document.getElementById('rows');
for (var n = 8; n <= 25; n++) {
    var tr = rows.insertRow();
    var head = document.createElement('th');
    head.textContent = n;
    if (n === 16) head.className = 'on';
    tr.appendChild(head);
    for (var c = 0; c < 12; c++) {
        var cell = tr.insertCell();
        if (n === 16 && c === 8) cell.className = 'selected';
    }
}
```
